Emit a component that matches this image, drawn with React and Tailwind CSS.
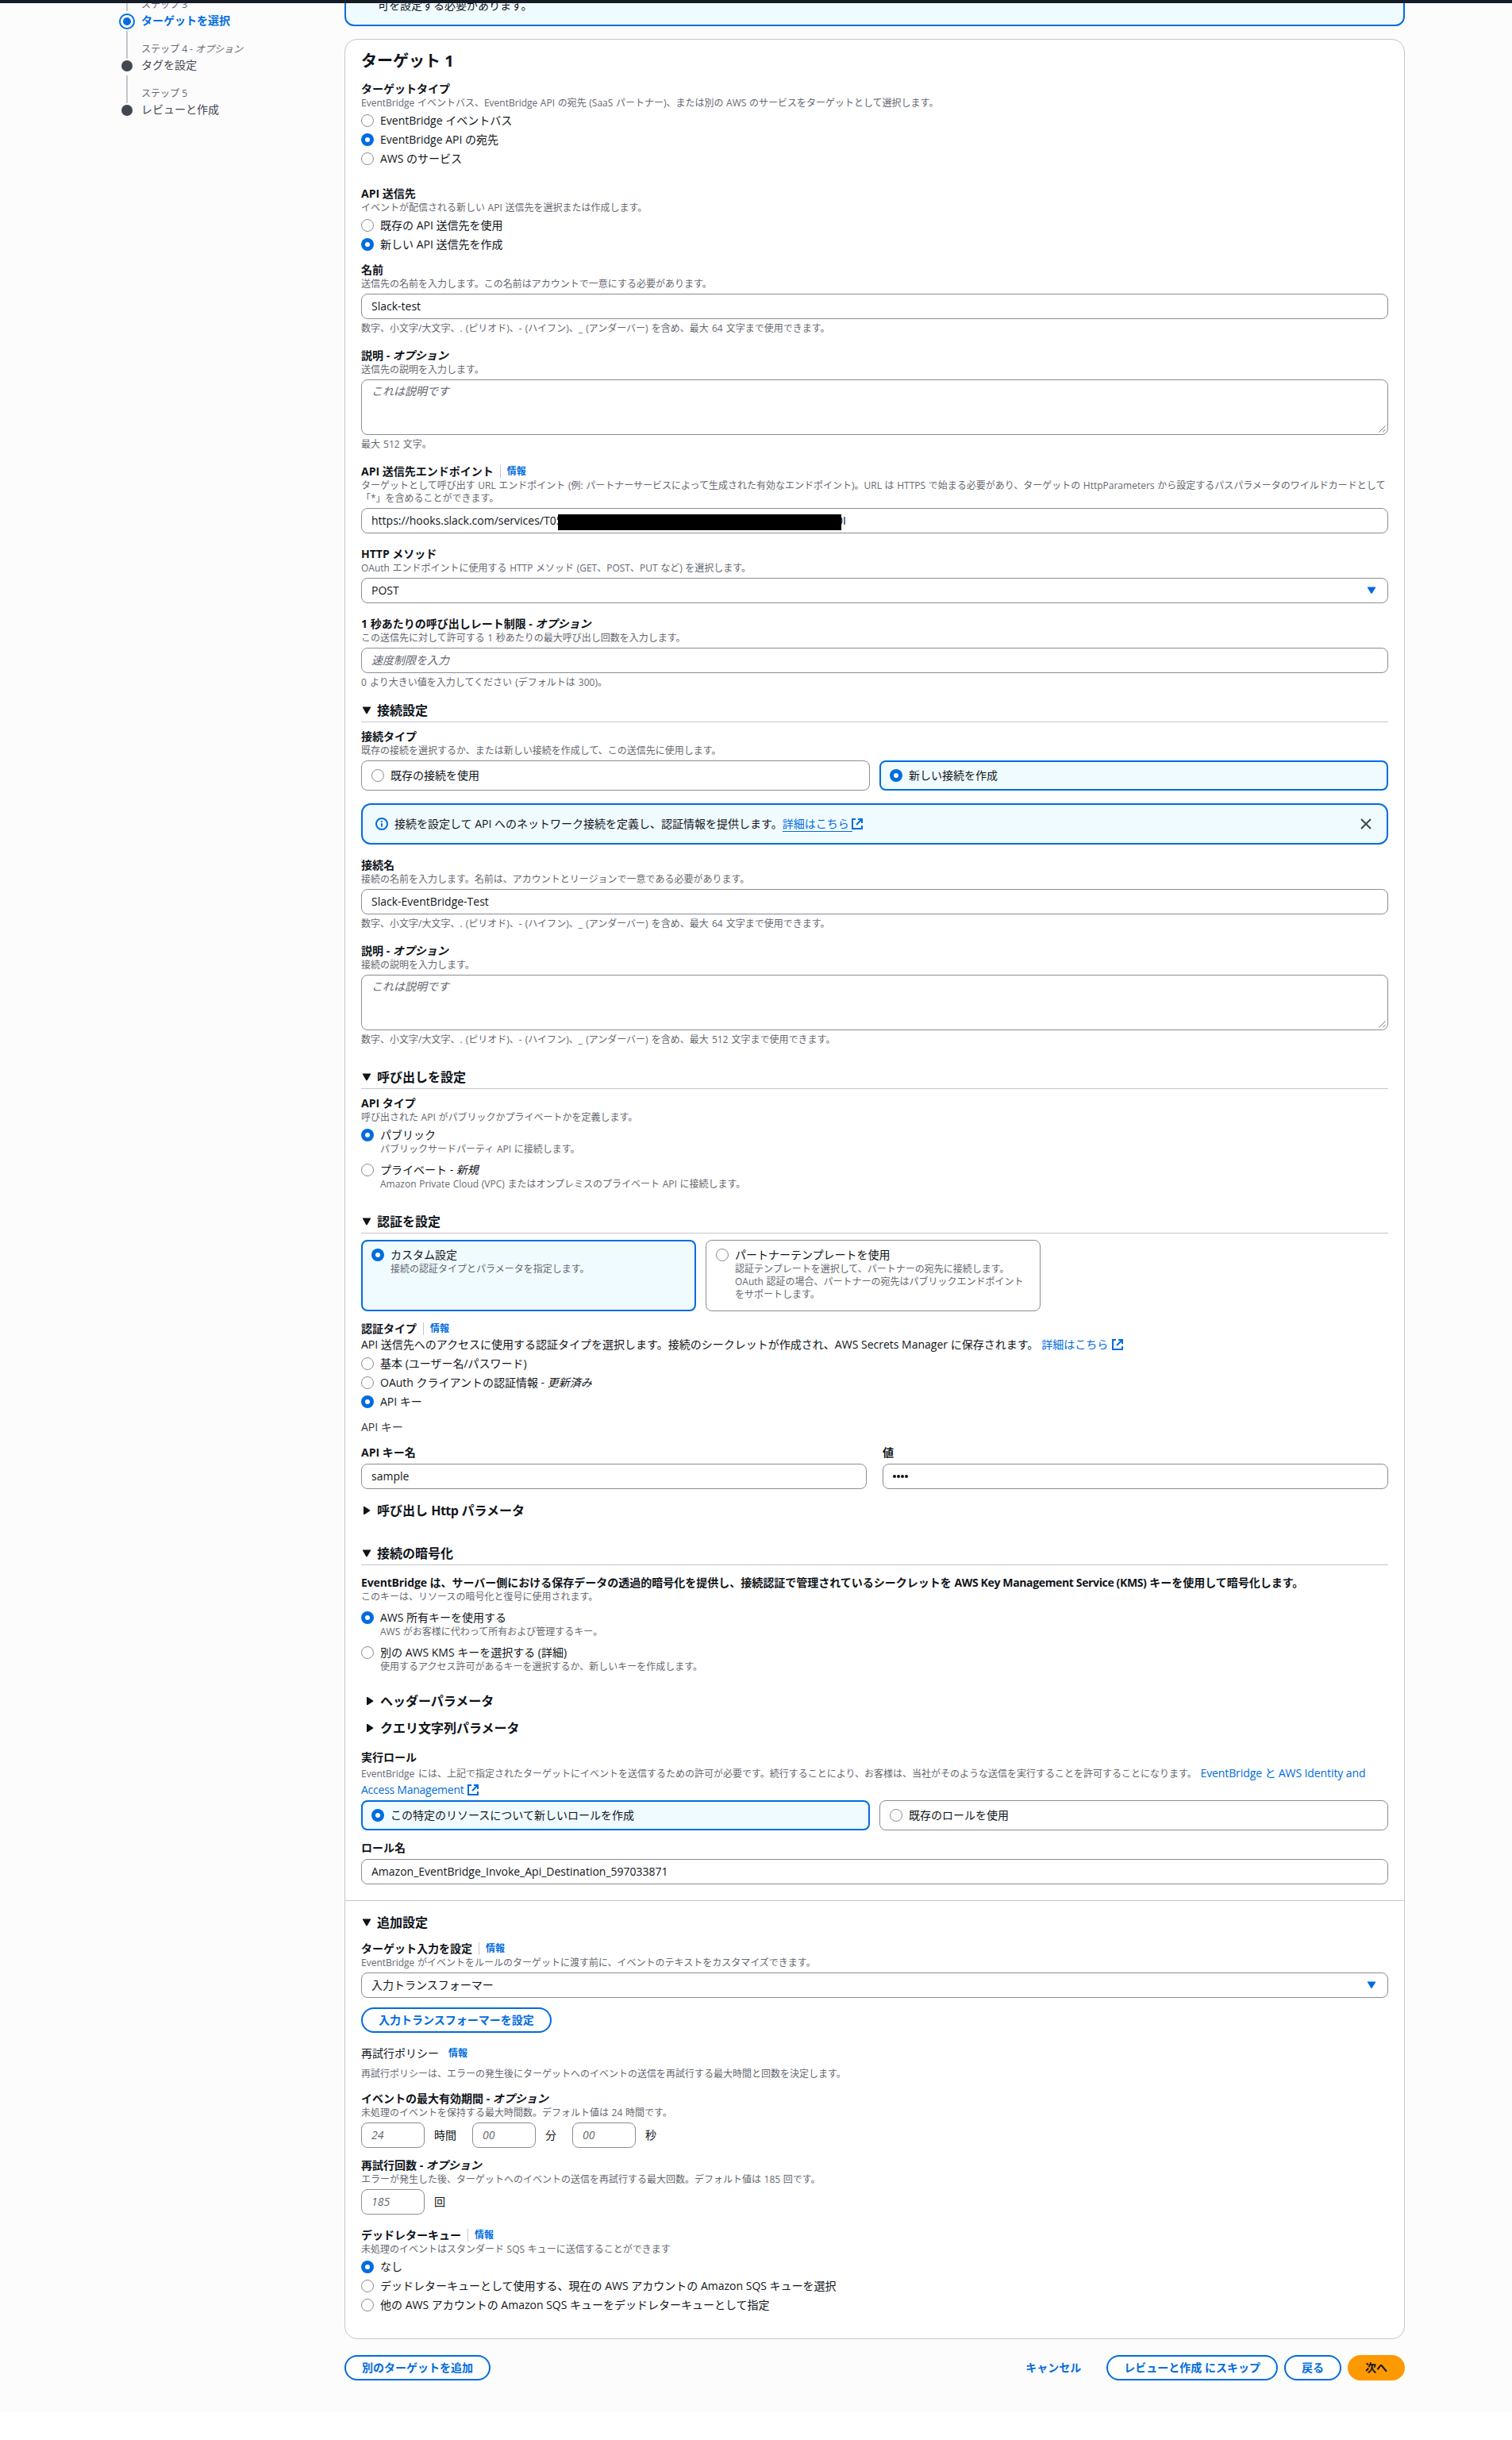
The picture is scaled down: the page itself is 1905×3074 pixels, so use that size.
import React from "react";

function Radio({ on }) {
  return on ? (
    <span className="flex h-4 w-4 shrink-0 items-center justify-center rounded-full bg-[#006ce0]">
      <span className="h-1.5 w-1.5 rounded-full bg-white" />
    </span>
  ) : (
    <span className="h-4 w-4 shrink-0 rounded-full border border-[#8c8c94] bg-white" />
  );
}

function RadioRow({ on, desc, children }) {
  return (
    <div className="flex gap-2">
      <div className="flex h-5 items-center">
        <Radio on={on} />
      </div>
      <div>
        <div className="h-5">{children}</div>
        {desc && <Desc>{desc}</Desc>}
      </div>
    </div>
  );
}

function Info() {
  return <span className="text-xs font-bold text-[#006ce0]">情報</span>;
}

function Label({ info, option, children }) {
  return (
    <div className="flex h-5 items-center">
      <span className="font-bold">
        {children}
        {option && (
          <>
            {" - "}
            <i>オプション</i>
          </>
        )}
      </span>
      {info && (
        <span className="ml-2 flex h-4 items-center border-l border-[#c6c6cd] pl-2">
          <Info />
        </span>
      )}
    </div>
  );
}

function Desc({ children }) {
  return <div className="text-xs text-[#656871] [word-spacing:0.5px]">{children}</div>;
}

function Field({ label, option, info, desc, hint, className = "", children }) {
  return (
    <div className={className}>
      <Label option={option} info={info}>
        {label}
      </Label>
      {desc && <Desc>{desc}</Desc>}
      <div className="mt-1">{children}</div>
      {hint && <div className="mt-1 text-xs text-[#656871] [word-spacing:1px]">{hint}</div>}
    </div>
  );
}

function Input({ placeholder, padding = "px-3", className = "", children }) {
  return (
    <div
      className={`relative flex h-8 items-center rounded-lg border border-[#8c8c94] bg-white ${padding} ${className}`}
    >
      {placeholder ? <i className="text-[#656871]">{placeholder}</i> : children}
    </div>
  );
}

function Textarea({ placeholder }) {
  return (
    <div className="relative h-[70px] rounded-lg border border-[#8c8c94] bg-white px-3 py-1">
      <i className="text-[#656871]">{placeholder}</i>
      <svg className="absolute right-0.5 bottom-0.5" width="9" height="9" viewBox="0 0 9 9" stroke="#777" fill="none">
        <path d="M0.5 8.5L8.5 0.5M5 8.5L8.5 5" />
      </svg>
    </div>
  );
}

function Select({ children }) {
  return (
    <Input className="justify-between" padding="pl-3 pr-3.5">
      <span>{children}</span>
      <svg width="12" height="10" viewBox="0 0 12 10" fill="#006ce0">
        <path d="M1 0.5h10v1L6.6 8.7h-1.2L1 1.5z" />
      </svg>
    </Input>
  );
}

function Triangle({ open }) {
  return (
    <span className="flex w-3.5 shrink-0 justify-center">
      <svg width="12" height="12" viewBox="0 0 12 12" fill="#0f141a">
        {open ? <path d="M1 1.5h10v1L6.6 10.2H5.4L1 2.5z" /> : <path d="M2 1h1.2l7 4.4v1.2l-7 4.4H2z" />}
      </svg>
    </span>
  );
}

function Section({ open = true, line = open, className = "", children }) {
  return (
    <div
      className={`flex h-[26px] items-center gap-1.5 border-b pb-1 text-base leading-5 font-bold ${
        line ? "border-[#c6c6cd]" : "border-transparent"
      } ${className}`}
    >
      <Triangle open={open} />
      <span>{children}</span>
    </div>
  );
}

function Tile({ on, title, desc, className = "" }) {
  return (
    <div
      className={`rounded-lg ${
        on ? "border-2 border-[#006ce0] bg-[#f0fbff] px-[11px] py-[7px]" : "border border-[#8c8c94] bg-white px-3 py-2"
      } ${className}`}
    >
      <RadioRow on={on} desc={desc}>
        {title}
      </RadioRow>
    </div>
  );
}

function ExternalIcon({ className = "" }) {
  return (
    <svg
      className={`inline-block ${className}`}
      width="16"
      height="16"
      viewBox="0 0 16 16"
      fill="none"
      stroke="currentColor"
      strokeWidth="2"
    >
      <path d="M6 2H2v12h12v-4" />
      <path d="M9 2h5v5M14 2L7 9" />
    </svg>
  );
}

function Button({ primary, children }) {
  return (
    <div
      className={`flex h-8 items-center rounded-full border-2 px-5 font-bold ${
        primary ? "border-[#ff9900] bg-[#ff9900] text-[#0f141a]" : "border-[#006ce0] bg-white text-[#006ce0]"
      }`}
    >
      {children}
    </div>
  );
}

function Step({ active, last, number, option, children }) {
  return (
    <div className="flex h-14 gap-2">
      <div className="flex w-5 shrink-0 flex-col items-center">
        <div className={`w-0.5 shrink-0 ${active ? "mb-px h-4 bg-[#c6c6cd]" : "h-[17px]"}`} />
        <div className="flex h-6 shrink-0 items-center justify-center">
          {active ? (
            <span className="flex h-5 w-5 items-center justify-center rounded-full border-2 border-[#006ce0] bg-white">
              <span className="h-2.5 w-2.5 rounded-full bg-[#006ce0]" />
            </span>
          ) : (
            <span className="h-3.5 w-3.5 rounded-full bg-[#424650]" />
          )}
        </div>
        {!last && <div className="-mb-5 w-0.5 flex-1 bg-[#c6c6cd]" />}
      </div>
      <div>
        <div className="h-4 text-xs text-[#656871]">
          ステップ {number}
          {option && (
            <>
              {" - "}
              <i>オプション</i>
            </>
          )}
        </div>
        <div className={active ? "mt-0.5 font-bold text-[#006ce0]" : "mt-0.5 text-[#424650]"}>{children}</div>
      </div>
    </div>
  );
}

const nameHint = "数字、小文字/大文字、. (ピリオド)、- (ハイフン)、_ (アンダーバー) を含め、最大 64 文字まで使用できます。";

export default function App() {
  return (
    <div className="h-[3074px] w-[1905px] bg-white">
      <div className="flex h-[3039px] flex-col overflow-hidden bg-[#fcfcfd] font-['Open_Sans','Noto_Sans_CJK_JP',sans-serif] text-sm leading-5 whitespace-nowrap text-[#0f141a]">
        <div className="z-10 h-1 shrink-0 bg-[#161d26]" />
        <div className="flex pl-[150px]">
          <nav className="-mt-1.5 w-[284px] shrink-0">
            <Step active number="3">
              ターゲットを選択
            </Step>
            <Step number="4" option>
              タグを設定
            </Step>
            <Step number="5" last>
              レビューと作成
            </Step>
          </nav>

          <main className="w-[1336px] shrink-0">
            <div className="-mt-5 h-[49px] rounded-xl border-2 border-[#006ce0] bg-[#f0fbff] px-10 pt-[11px]">
              可を設定する必要があります。
            </div>

            <div className="mt-4 h-[2898px] rounded-2xl border border-[#c6c6cd] bg-white">
              <div className="h-[2345px] border-b border-[#c6c6cd] px-5 pt-[15px]">
                <h2 className="text-xl leading-6 font-bold">ターゲット 1</h2>

                <div className="mt-[13px]">
                  <Label>ターゲットタイプ</Label>
                  <Desc>EventBridge イベントバス、EventBridge API の宛先 (SaaS パートナー)、または別の AWS のサービスをターゲットとして選択します。</Desc>
                  <div className="mt-1 flex flex-col gap-1">
                    <RadioRow>EventBridge イベントバス</RadioRow>
                    <RadioRow on>EventBridge API の宛先</RadioRow>
                    <RadioRow>AWS のサービス</RadioRow>
                  </div>
                </div>

                <div className="mt-6">
                  <Label>API 送信先</Label>
                  <Desc>イベントが配信される新しい API 送信先を選択または作成します。</Desc>
                  <div className="mt-1 flex flex-col gap-1">
                    <RadioRow>既存の API 送信先を使用</RadioRow>
                    <RadioRow on>新しい API 送信先を作成</RadioRow>
                  </div>
                </div>

                <div className="mt-3 flex flex-col gap-4">
                  <Field label="名前" desc="送信先の名前を入力します。この名前はアカウントで一意にする必要があります。" hint={nameHint}>
                    <Input>Slack-test</Input>
                  </Field>
                  <Field label="説明" option desc="送信先の説明を入力します。" hint="最大 512 文字。">
                    <Textarea placeholder="これは説明です" />
                  </Field>
                  <Field
                    label="API 送信先エンドポイント"
                    info
                    desc={
                      <>
                        ターゲットとして呼び出す URL エンドポイント (例: パートナーサービスによって生成された有効なエンドポイント)。URL は HTTPS で始まる必要があり、ターゲットの HttpParameters から設定するパスパラメータのワイルドカードとして
                        <br />
                        「*」を含めることができます。
                      </>
                    }
                  >
                    <Input>
                      https://hooks.slack.com/services/T05
                      <span className="absolute left-[598px]">0I</span>
                      <span className="absolute top-[7px] left-[247px] h-5 w-[357px] bg-black" />
                    </Input>
                  </Field>
                  <Field label="HTTP メソッド" desc="OAuth エンドポイントに使用する HTTP メソッド (GET、POST、PUT など) を選択します。">
                    <Select>POST</Select>
                  </Field>
                  <Field
                    label="1 秒あたりの呼び出しレート制限"
                    option
                    desc="この送信先に対して許可する 1 秒あたりの最大呼び出し回数を入力します。"
                    hint="0 より大きい値を入力してください (デフォルトは 300)。"
                  >
                    <Input placeholder="速度制限を入力" />
                  </Field>
                </div>

                <Section className="mt-4">接続設定</Section>
                <Field className="mt-2" label="接続タイプ" desc="既存の接続を選択するか、または新しい接続を作成して、この送信先に使用します。">
                  <div className="grid grid-cols-2 gap-3">
                    <Tile title="既存の接続を使用" />
                    <Tile on title="新しい接続を作成" />
                  </div>
                </Field>
                <div className="mt-4 flex h-[52px] items-center rounded-xl border-2 border-[#006ce0] bg-[#f0fbff] px-4">
                  <svg width="16" height="16" viewBox="0 0 16 16" fill="none" stroke="#006ce0" strokeWidth="2">
                    <circle cx="8" cy="8" r="7" />
                    <path d="M8 11.5V7.2M8 6V4.2" />
                  </svg>
                  <span className="ml-2">接続を設定して API へのネットワーク接続を定義し、認証情報を提供します。</span>
                  <span className="border-b border-[#006ce0] pr-1 leading-[18px] text-[#006ce0]">詳細はこちら</span>
                  <ExternalIcon className="-ml-0.5 text-[#006ce0]" />
                  <svg className="mr-0.5 ml-auto" width="16" height="16" viewBox="0 0 16 16" fill="none" stroke="#424650" strokeWidth="2">
                    <path d="M2 2l12 12M14 2L2 14" />
                  </svg>
                </div>
                <div className="mt-4 flex flex-col gap-4">
                  <Field label="接続名" desc="接続の名前を入力します。名前は、アカウントとリージョンで一意である必要があります。" hint={nameHint}>
                    <Input>Slack-EventBridge-Test</Input>
                  </Field>
                  <Field label="説明" option desc="接続の説明を入力します。" hint={nameHint.replace("64", "512")}>
                    <Textarea placeholder="これは説明です" />
                  </Field>
                </div>

                <Section className="mt-7">呼び出しを設定</Section>
                <Field className="mt-2" label="API タイプ" desc="呼び出された API がパブリックかプライベートかを定義します。">
                  <div className="flex flex-col gap-2">
                    <RadioRow on desc="パブリックサードパーティ API に接続します。">
                      パブリック
                    </RadioRow>
                    <RadioRow desc="Amazon Private Cloud (VPC) またはオンプレミスのプライベート API に接続します。">
                      プライベート - <i>新規</i>
                    </RadioRow>
                  </div>
                </Field>

                <Section className="mt-7">認証を設定</Section>
                <div className="mt-2 flex h-[90px] gap-3">
                  <Tile on className="w-[422px]" title="カスタム設定" desc="接続の認証タイプとパラメータを指定します。" />
                  <Tile
                    className="w-[422px]"
                    title="パートナーテンプレートを使用"
                    desc={
                      <>
                        認証テンプレートを選択して、パートナーの宛先に接続します。
                        <br />
                        OAuth 認証の場合、パートナーの宛先はパブリックエンドポイント
                        <br />
                        をサポートします。
                      </>
                    }
                  />
                </div>
                <div className="mt-3">
                  <Label info>認証タイプ</Label>
                  <div className="flex h-5 items-center">
                    <span>API 送信先へのアクセスに使用する認証タイプを選択します。接続のシークレットが作成され、AWS Secrets Manager に保存されます。</span>
                    <span className="ml-1 text-[#006ce0]">詳細はこちら</span>
                    <ExternalIcon className="ml-1 text-[#006ce0]" />
                  </div>
                  <div className="mt-1 flex flex-col gap-1">
                    <RadioRow>基本 (ユーザー名/パスワード)</RadioRow>
                    <RadioRow>
                      OAuth クライアントの認証情報 - <i>更新済み</i>
                    </RadioRow>
                    <RadioRow on>API キー</RadioRow>
                  </div>
                </div>
                <div className="mt-3 text-[#333843]">API キー</div>
                <div className="mt-3 grid grid-cols-2 gap-5">
                  <Field label="API キー名">
                    <Input>sample</Input>
                  </Field>
                  <Field label="値">
                    <Input>
                      <span className="flex gap-px">
                        {[0, 1, 2, 3].map((i) => (
                          <span key={i} className="h-1 w-1 rounded-full bg-[#0f141a]" />
                        ))}
                      </span>
                    </Input>
                  </Field>
                </div>

                <Section className="mt-4" open={false}>
                  呼び出し <span className="tracking-[-0.5px]">Http</span> パラメータ
                </Section>

                <Section className="mt-7">接続の暗号化</Section>
                <div className="mt-3">
                  <Label>
                    <span className="tracking-[-0.15px]">EventBridge</span>{" "}
                    は、サーバー側における保存データの透過的暗号化を提供し、接続認証で管理されているシークレットを{" "}
                    <span className="tracking-[-0.36px]">AWS Key Management Service (KMS)</span> キーを使用して暗号化します。
                  </Label>
                  <Desc>このキーは、リソースの暗号化と復号に使用されます。</Desc>
                  <div className="mt-2 flex flex-col gap-2">
                    <RadioRow on desc="AWS がお客様に代わって所有および管理するキー。">
                      AWS 所有キーを使用する
                    </RadioRow>
                    <RadioRow desc="使用するアクセス許可があるキーを選択するか、新しいキーを作成します。">
                      別の AWS KMS キーを選択する (詳細)
                    </RadioRow>
                  </div>
                </div>

                <div className="mt-6 flex flex-col gap-2 pl-1">
                  <Section open={false}>ヘッダーパラメータ</Section>
                  <Section open={false}>クエリ文字列パラメータ</Section>
                </div>

                <div className="mt-3">
                  <Label>実行ロール</Label>
                  <div className="h-10 text-xs leading-5 text-[#656871]">
                    <span className="[word-spacing:1.5px]">
                      EventBridge には、上記で指定されたターゲットにイベントを送信するための許可が必要です。続行することにより、お客様は、当社がそのような送信を実行することを許可することになります。{" "}
                    </span>
                    <span className="text-sm leading-5 tracking-[-0.1px] text-[#006ce0]">
                      EventBridge と AWS Identity and
                      <br />
                      <span className="tracking-[-0.25px]">Access Management </span>
                      <ExternalIcon className="align-[-3px]" />
                    </span>
                  </div>
                  <div className="mt-1 grid grid-cols-2 gap-3">
                    <Tile on title="この特定のリソースについて新しいロールを作成" />
                    <Tile title="既存のロールを使用" />
                  </div>
                </div>
                <Field className="mt-3" label="ロール名">
                  <Input>Amazon_EventBridge_Invoke_Api_Destination_597033871</Input>
                </Field>
              </div>

              <div className="px-5 pt-4">
                <Section line={false}>追加設定</Section>
                <Field className="mt-2" label="ターゲット入力を設定" info desc="EventBridge がイベントをルールのターゲットに渡す前に、イベントのテキストをカスタマイズできます。">
                  <Select>入力トランスフォーマー</Select>
                </Field>
                <div className="mt-3 flex">
                  <Button>入力トランスフォーマーを設定</Button>
                </div>
                <div className="mt-4 flex h-5 items-center gap-3">
                  <span>再試行ポリシー</span>
                  <Info />
                </div>
                <div className="mt-2">
                  <Desc>再試行ポリシーは、エラーの発生後にターゲットへのイベントの送信を再試行する最大時間と回数を決定します。</Desc>
                </div>
                <Field className="mt-[13px]" label="イベントの最大有効期間" option desc="未処理のイベントを保持する最大時間数。デフォルト値は 24 時間です。">
                  <div className="flex items-center">
                    <Input className="w-20" placeholder="24" />
                    <span className="mr-5 ml-3">時間</span>
                    <Input className="w-20" placeholder="00" />
                    <span className="mr-5 ml-3">分</span>
                    <Input className="w-20" placeholder="00" />
                    <span className="ml-3">秒</span>
                  </div>
                </Field>
                <Field className="mt-3" label="再試行回数" option desc="エラーが発生した後、ターゲットへのイベントの送信を再試行する最大回数。デフォルト値は 185 回です。">
                  <div className="flex items-center">
                    <Input className="w-20" placeholder="185" />
                    <span className="ml-3">回</span>
                  </div>
                </Field>
                <Field className="mt-4" label="デッドレターキュー" info desc="未処理のイベントはスタンダード SQS キューに送信することができます">
                  <div className="flex flex-col gap-1">
                    <RadioRow on>なし</RadioRow>
                    <RadioRow>デッドレターキューとして使用する、現在の AWS アカウントの Amazon SQS キューを選択</RadioRow>
                    <RadioRow>他の AWS アカウントの Amazon SQS キューをデッドレターキューとして指定</RadioRow>
                  </div>
                </Field>
              </div>
            </div>

            <div className="mt-5 flex items-center gap-2">
              <Button>別のターゲットを追加</Button>
              <div className="mr-6 ml-auto font-bold text-[#006ce0]">キャンセル</div>
              <Button>レビューと作成 にスキップ</Button>
              <Button>戻る</Button>
              <Button primary>次へ</Button>
            </div>
          </main>
        </div>
      </div>
    </div>
  );
}
